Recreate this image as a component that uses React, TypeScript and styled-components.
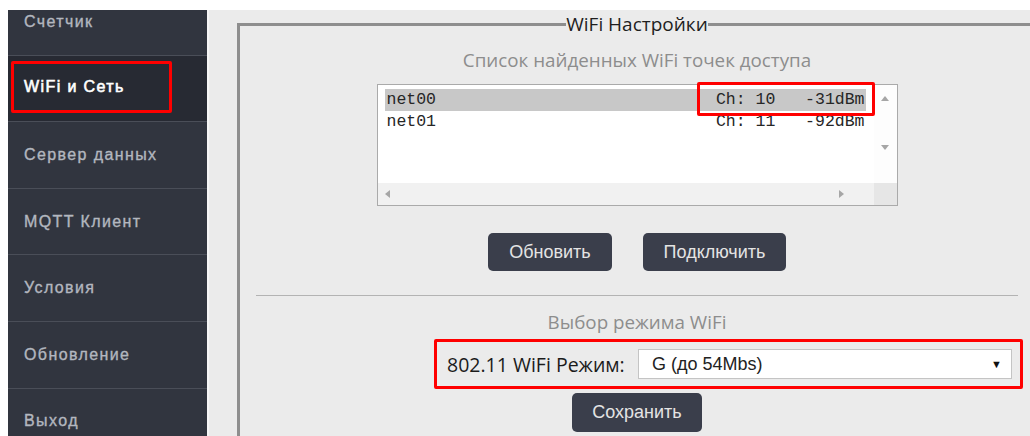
import React from 'react';
import styled, { createGlobalStyle } from 'styled-components';

const GlobalStyle = createGlobalStyle`
    html, body {
        margin: 0;
        padding: 0;
        background: #ffffff;
    }
`;

const menu = ['Счетчик', 'WiFi и Сеть', 'Сервер данных', 'MQTT Клиент', 'Условия', 'Обновление', 'Выход'];

const networks = [
    { ssid: 'net00', channel: 10, rssi: -31 },
    { ssid: 'net01', channel: 11, rssi: -92 },
];

const Arrow: React.FC<{ dir: 'up' | 'down' | 'left' | 'right' }> = ({ dir }) => {
    const points = {
        up: '0,6 4,1 8,6',
        down: '0,1 4,6 8,1',
        left: '6,0 1,4 6,8',
        right: '1,0 6,4 1,8',
    }[dir];
    return (
        <svg width="8" height="8" viewBox="0 0 8 8">
            <polygon points={points} fill="#a6a6a6" />
        </svg>
    );
};

const App: React.FC = () => {
    const selected = 0;

    return (
        <Frame>
            <GlobalStyle />
            <Sidebar>
                <MenuList>
                    {menu.map((item) => (
                        <MenuItem key={item} $active={item === 'WiFi и Сеть'}>
                            {item === 'WiFi и Сеть' ? <Marked>{item}</Marked> : item}
                        </MenuItem>
                    ))}
                </MenuList>
            </Sidebar>
            <Main>
                <Fieldset>
                    <Legend>WiFi Настройки</Legend>
                    <Caption>Список найденных WiFi точек доступа</Caption>
                    <ListBox>
                        <Options>
                            {networks.map((n, i) => (
                                <Option key={n.ssid} $selected={i === selected}>
                                    <span>{n.ssid}</span>
                                    <span>{`Ch: ${n.channel}   ${n.rssi}dBm`}</span>
                                </Option>
                            ))}
                        </Options>
                        <VScroll>
                            <Arrow dir="up" />
                            <Arrow dir="down" />
                        </VScroll>
                        <HScroll>
                            <Arrow dir="left" />
                            <Arrow dir="right" />
                        </HScroll>
                        <Corner />
                        <SignalMark />
                    </ListBox>
                    <ButtonRow>
                        <Button $width={124}>Обновить</Button>
                        <Button $width={143}>Подключить</Button>
                    </ButtonRow>
                    <Divider />
                    <Caption $top={14}>Выбор режима WiFi</Caption>
                    <ModeRow>
                        <ModeBox>
                            <ModeLabel>802.11 WiFi Режим:</ModeLabel>
                            <Select>
                                <span>G (до 54Mbs)</span>
                                <Caret>▼</Caret>
                            </Select>
                        </ModeBox>
                    </ModeRow>
                    <ButtonRow $top={4}>
                        <Button $width={130} $height={39}>Сохранить</Button>
                    </ButtonRow>
                </Fieldset>
            </Main>
        </Frame>
    );
};

export default App;

const Frame = styled.div`
    display: flex;
    height: 436px;
    padding: 10px 0 0 8px;
    box-sizing: border-box;
    overflow: hidden;
    background: #ffffff;
`;

const Sidebar = styled.nav`
    width: 199px;
    flex-shrink: 0;
    background: #31353f;
    border-right: 2px solid #f6f6f6;
    overflow: hidden;
`;

const MenuList = styled.ul`
    margin: -21px 0 0;
    padding: 0;
    list-style: none;
`;

const MenuItem = styled.li<{ $active?: boolean }>`
    display: flex;
    align-items: center;
    height: 66.6px;
    box-sizing: border-box;
    padding-left: ${(p) => (p.$active ? '3px' : '16px')};
    border-bottom: 1px solid #4a4e58;
    background: ${(p) => (p.$active ? '#272a33' : 'transparent')};
    color: ${(p) => (p.$active ? '#ffffff' : '#b3b7bf')};
    font-family: "Liberation Sans", Arial, sans-serif;
    font-size: 16px;
    letter-spacing: 1.4px;
    -webkit-text-stroke: ${(p) => (p.$active ? '0.6px' : '0.35px')};
`;

const Marked = styled.span`
    display: flex;
    align-items: center;
    width: 161px;
    height: 52px;
    margin-top: -3px;
    box-sizing: border-box;
    padding-left: 10px;
    border: 3px solid #ff0000;
    border-radius: 2px;
`;

const Main = styled.main`
    flex: 1;
    background: #ebebeb;
    padding: 2px 0 0 28px;
    overflow: hidden;
`;

const Fieldset = styled.fieldset`
    width: 800px;
    min-width: 0;
    box-sizing: border-box;
    margin: 0;
    padding: 12px 16px 0;
    border: 3px solid #8e8e8e;
    border-bottom: none;
    min-height: 440px;
    font-family: "Open Sans", "Noto Sans", sans-serif;
`;

const Legend = styled.legend`
    margin: 0 auto;
    padding: 0;
    font-size: 19px;
    color: #1e1e1e;
    line-height: 24px;
`;

const Caption = styled.div<{ $top?: number }>`
    margin-top: ${(p) => p.$top ?? 0}px;
    text-align: center;
    font-size: 18.8px;
    line-height: 24px;
    color: #8d8d8d;
`;

const ListBox = styled.div`
    position: relative;
    width: 521px;
    height: 122px;
    margin: 12px auto 0;
    box-sizing: border-box;
    border: 1px solid #aaaaaa;
    background: #ffffff;
    display: grid;
    grid-template-columns: 1fr 23px;
    grid-template-rows: 1fr 22px;
`;

const Options = styled.div`
    padding: 4px 0 0 7px;
    font-family: "Liberation Mono", "DejaVu Sans Mono", monospace;
    font-size: 16.5px;
    color: #262626;
    white-space: pre;
`;

const Option = styled.div<{ $selected?: boolean }>`
    display: flex;
    justify-content: space-between;
    width: 481px;
    height: 22px;
    line-height: 22px;
    box-sizing: border-box;
    padding: 0 1px 0 2px;
    background: ${(p) => (p.$selected ? '#c8c8c8' : 'transparent')};
`;

const VScroll = styled.div`
    display: flex;
    flex-direction: column;
    justify-content: space-between;
    align-items: center;
    padding: 10px 0 31px;
    background: #fdfdfd;
`;

const HScroll = styled.div`
    display: flex;
    justify-content: space-between;
    align-items: center;
    padding: 0 28px 0 6px;
    background: #f1f1f1;
`;

const Corner = styled.div`
    background: #e6e6e6;
`;

const SignalMark = styled.div`
    position: absolute;
    left: 319px;
    top: -3px;
    width: 178px;
    height: 34px;
    box-sizing: border-box;
    border: 3px solid #ff0000;
    border-radius: 2px;
`;

const ButtonRow = styled.div<{ $top?: number }>`
    display: flex;
    justify-content: center;
    gap: 31px;
    margin-top: ${(p) => p.$top ?? 27}px;
`;

const Button = styled.button<{ $width: number; $height?: number }>`
    width: ${(p) => p.$width}px;
    height: ${(p) => p.$height ?? 38}px;
    border: none;
    border-radius: 5px;
    background: #3a3e4b;
    color: #e4e4e4;
    font-family: "Liberation Sans", Arial, sans-serif;
    font-size: 18px;
`;

const Divider = styled.hr`
    margin: 24px 0 0;
    border: none;
    border-top: 1px solid #b3b3b3;
`;

const ModeRow = styled.div`
    display: flex;
    padding-left: 178px;
    margin-top: 5px;
`;

const ModeBox = styled.div`
    display: flex;
    align-items: center;
    justify-content: space-between;
    width: 589px;
    height: 50px;
    flex-shrink: 0;
    box-sizing: border-box;
    padding: 0 8px 0 10px;
    border: 3px solid #ff0000;
    border-radius: 2px;
`;

const ModeLabel = styled.span`
    font-size: 19.5px;
    color: #1b1b1b;
    white-space: nowrap;
`;

const Select = styled.div`
    display: flex;
    align-items: center;
    justify-content: space-between;
    width: 374px;
    height: 30px;
    box-sizing: border-box;
    padding: 0 9px 0 13px;
    border: 1px solid #c4c4c4;
    background: #ffffff;
    font-family: "Liberation Sans", Arial, sans-serif;
    font-size: 18px;
    color: #222222;
`;

const Caret = styled.span`
    font-size: 11px;
    color: #111111;
`;
